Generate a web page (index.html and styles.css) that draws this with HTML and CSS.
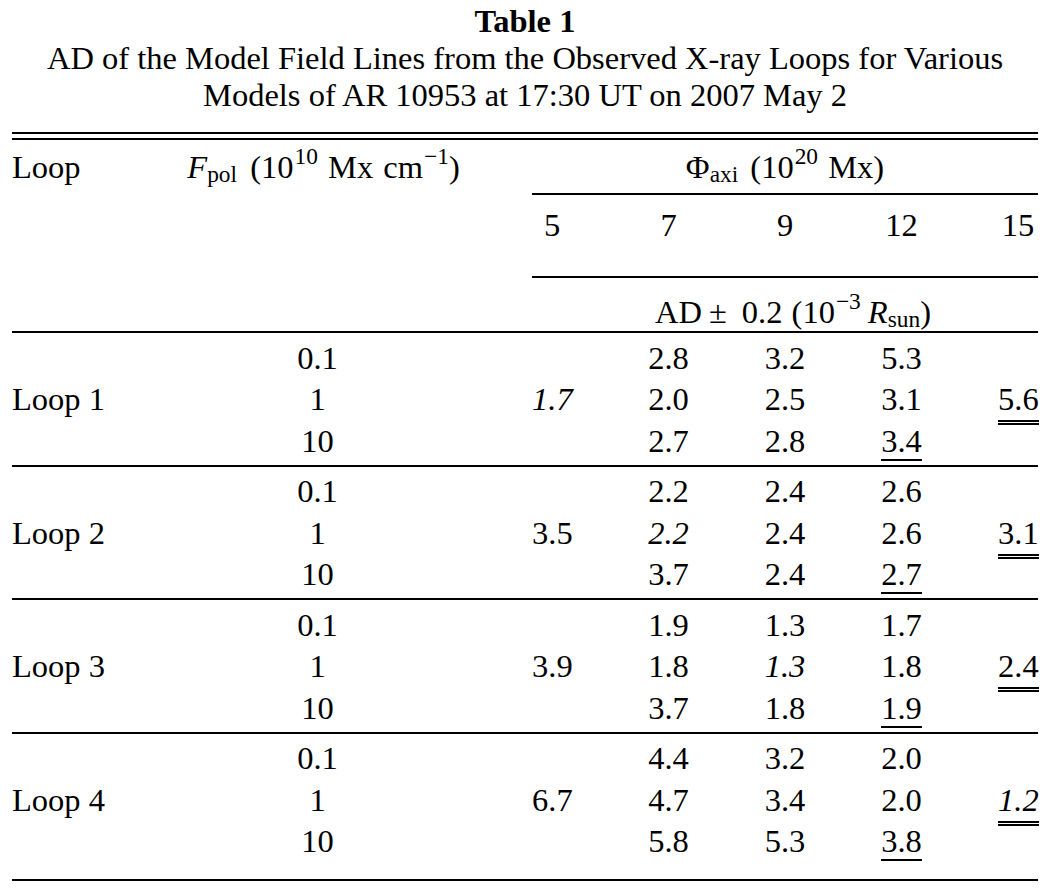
FILE: index.html
```html
<!DOCTYPE html>
<html lang="en">
<head>
<meta charset="utf-8">
<title>Table 1</title>
<link rel="stylesheet" href="styles.css">
</head>
<body>
<div class="page">
  <header class="caption">
    <div class="caption-label">Table 1</div>
    <div>AD of the Model Field Lines from the Observed X-ray Loops for Various</div>
    <div>Models of AR 10953 at 17:30 UT on 2007 May 2</div>
  </header>
  <div class="double-rule"></div>
  <table class="data">
    <colgroup>
      <col class="w-loop"><col class="w-fpol"><col class="w-edge"><col class="w-mid"><col class="w-mid"><col class="w-mid"><col class="w-edge">
    </colgroup>
    <thead>
      <tr class="h1">
        <th class="c-loop">Loop</th>
        <th class="c-fpol"><i>F</i><sub>pol</sub> (10<sup>10</sup> Mx cm<sup>&minus;1</sup>)</th>
        <th class="c-span rule" colspan="5">&Phi;<sub>axi</sub> (10<sup>20</sup> Mx)</th>
      </tr>
      <tr class="h2">
        <td></td><td></td>
        <td class="n first rule">5</td><td class="n rule">7</td><td class="n rule">9</td><td class="n rule">12</td><td class="n last rule">15</td>
      </tr>
      <tr class="h3">
        <td class="rule"></td><td class="rule"></td>
        <td class="c-ad rule" colspan="5">AD<span class="sp-s"></span>&plusmn;<span class="sp-m"></span>0.2 (10<sup>&minus;3</sup><span class="sp-s"></span><i>R</i><sub>sun</sub>)</td>
      </tr>
    </thead>
    <tbody>
      <tr class="group">
        <td class="c-loop single">Loop 1</td>
        <td class="c-fpol">0.1<br>1<br>10</td>
        <td class="n first single"><i>1.7</i></td>
        <td class="n">2.8<br>2.0<br>2.7</td>
        <td class="n">3.2<br>2.5<br>2.8</td>
        <td class="n">5.3<br>3.1<br><span class="u1">3.4</span></td>
        <td class="n last single"><span class="u2">5.6</span></td>
      </tr>
      <tr class="group">
        <td class="c-loop single">Loop 2</td>
        <td class="c-fpol">0.1<br>1<br>10</td>
        <td class="n first single">3.5</td>
        <td class="n">2.2<br><i>2.2</i><br>3.7</td>
        <td class="n">2.4<br>2.4<br>2.4</td>
        <td class="n">2.6<br>2.6<br><span class="u1">2.7</span></td>
        <td class="n last single"><span class="u2">3.1</span></td>
      </tr>
      <tr class="group">
        <td class="c-loop single">Loop 3</td>
        <td class="c-fpol">0.1<br>1<br>10</td>
        <td class="n first single">3.9</td>
        <td class="n">1.9<br>1.8<br>3.7</td>
        <td class="n">1.3<br><i>1.3</i><br>1.8</td>
        <td class="n">1.7<br>1.8<br><span class="u1">1.9</span></td>
        <td class="n last single"><span class="u2">2.4</span></td>
      </tr>
      <tr class="group last-group">
        <td class="c-loop single">Loop 4</td>
        <td class="c-fpol">0.1<br>1<br>10</td>
        <td class="n first single">6.7</td>
        <td class="n">4.4<br>4.7<br>5.8</td>
        <td class="n">3.2<br>3.4<br>5.3</td>
        <td class="n">2.0<br>2.0<br><span class="u1">3.8</span></td>
        <td class="n last single"><span class="u2"><i>1.2</i></span></td>
      </tr>
    </tbody>
  </table>
</div>
</body>
</html>
```
FILE: styles.css
```css
html, body {
  margin: 0;
  padding: 0;
  background: #fff;
}

body {
  font-family: "Liberation Serif", "Times New Roman", serif;
  font-size: 32.5px;
  color: #000;
}

.page {
  padding: 3px 14px 0 12px;
  width: 1026px;
}

.caption {
  text-align: center;
  line-height: 37px;
}

.caption-label {
  font-weight: bold;
}

.double-rule {
  margin-top: 18px;
  height: 4px;
  border-top: 2px solid #000;
  border-bottom: 2px solid #000;
}

.data {
  width: 1026px;
  table-layout: fixed;
  border-collapse: separate;
  border-spacing: 0;
}

.w-loop { width: 148px; }
.w-fpol { width: 372px; }
.w-edge { width: 78.25px; }
.w-mid { width: 116.5px; }

.data th,
.data td {
  padding: 0;
  font-weight: normal;
  line-height: 41.5px;
  vertical-align: top;
  white-space: nowrap;
}

.data sup,
.data sub {
  font-size: 0.72em;
  line-height: 0;
}

.data sup { vertical-align: 0.62em; margin-left: 1px; }
.data sub { vertical-align: -0.15em; }

.c-loop { text-align: left; }

.c-fpol {
  text-align: center;
  padding-right: 45px !important;
}

.c-span { text-align: center; }

.n { text-align: center; }
.n.first { padding-right: 38.25px !important; }
.n.last { padding-left: 38.25px !important; }

.rule { border-bottom: 2px solid #000; }

.h1 th {
  padding-top: 7px;
  padding-bottom: 4.5px;
  word-spacing: 2px;
}

.h1 .c-fpol sub { margin-right: 3px; }
.h1 .c-span sub { margin-right: 2px; }

.h2 td {
  padding-top: 10px;
  padding-bottom: 29.5px;
}

.h3 td {
  line-height: 36px;
  padding-top: 16px;
  padding-bottom: 1px;
}

.c-ad {
  text-align: center;
  padding-left: 16px !important;
  word-spacing: 1px;
}

.sp-s { display: inline-block; width: 7px; }
.sp-m { display: inline-block; width: 15px; }

.group td {
  padding-top: 4.5px;
  padding-bottom: 2.5px;
  border-bottom: 2px solid #000;
}

.group td.single {
  padding-top: 46px;
}

/* value column in the body sits slightly right of the header centre */
.group td.c-fpol {
  padding-right: 57px !important;
}

.last-group td {
  padding-bottom: 16.5px;
}

.u1 {
  border-bottom: 2px solid #000;
}

.u2 {
  border-bottom: 5px double #000;
  padding-bottom: 3px;
}
```
